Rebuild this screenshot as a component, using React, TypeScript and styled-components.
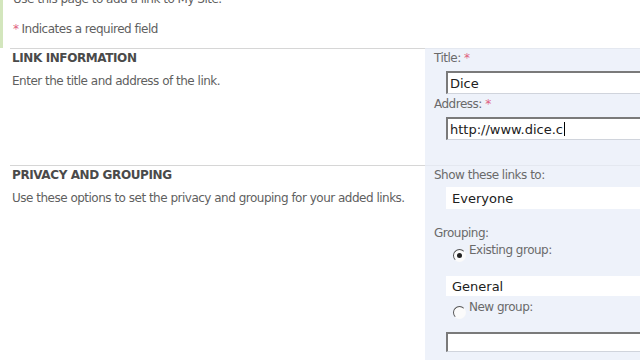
import React from 'react'
import styled, { createGlobalStyle } from 'styled-components'

const GlobalStyle = createGlobalStyle`
  html, body {
    margin: 0;
    padding: 0;
    background: #ffffff;
    overflow: hidden;
  }
  body {
    width: 640px;
    height: 360px;
    font-family: "DejaVu Sans", Verdana, sans-serif;
    color: #5a5a5a;
  }
`

const Page = styled.div`
  width: 640px;
  height: 360px;
  overflow: hidden;
  display: flex;
  flex-direction: column;
`

const Intro = styled.div`
  border-left: 3px solid #d3e6bd;
  padding: 0 0 0 10px;
  height: 48px;
  box-sizing: border-box;
  display: flex;
  flex-direction: column;
  gap: 15px;
`

const IntroLine = styled.div`
  font-size: 12px;
  letter-spacing: -0.5px;
  line-height: 15px;
  margin-top: -8px;
  color: #5f5f5f;
`

const RequiredNote = styled.div`
  font-size: 12px;
  letter-spacing: -0.5px;
  line-height: 15px;
  color: #5f5f5f;
`

const Star = styled.span`
  color: #e0607e;
  margin-right: 3px;
`

const Section = styled.div<{ h: number }>`
  display: grid;
  grid-template-columns: 425px 1fr;
  height: ${p => p.h}px;
  flex: none;
`

const LeftCol = styled.div`
  margin-left: 10px;
  border-top: 1px solid #d6d6d6;
  padding: 2px 0 0 2px;
`

const RightCol = styled.div`
  background: #eef2fa;
  border-top: 1px solid #e4e8f0;
  padding: 2px 0 0 9px;
  display: flex;
  flex-direction: column;
`

const Heading = styled.div`
  font-size: 12px;
  line-height: 15px;
  font-weight: bold;
  color: #4a4a4a;
  letter-spacing: -0.4px;
`

const Desc = styled.div`
  font-size: 12px;
  line-height: 15px;
  letter-spacing: -0.5px;
  margin-top: 8px;
  color: #5f5f5f;
`

const Label = styled.div<{ mt?: number }>`
  font-size: 12px;
  line-height: 15px;
  letter-spacing: -0.5px;
  color: #6a6a6a;
  margin-top: ${p => p.mt ?? 0}px;
`

const TextBox = styled.div<{ mt?: number; h?: number }>`
  box-sizing: border-box;
  margin: ${p => p.mt ?? 0}px 0 0 12px;
  height: ${p => p.h ?? 23}px;
  background: #ffffff;
  border-top: 2px solid #7a7a7a;
  border-left: 2px solid #7a7a7a;
  border-bottom: 1px solid #d0d4dc;
  font-size: 13px;
  color: #202020;
  padding-left: 2px;
  display: flex;
  align-items: center;
`

const SelectBox = styled.div<{ mt?: number; h?: number }>`
  margin: ${p => p.mt ?? 0}px 0 0 12px;
  height: ${p => p.h ?? 22}px;
  background: #ffffff;
  font-size: 13px;
  color: #202020;
  padding-left: 6px;
  display: flex;
  align-items: center;
`

const Caret = styled.span`
  display: inline-block;
  width: 1px;
  height: 14px;
  background: #000;
  margin-left: 1px;
`

const RadioRow = styled.div<{ mt?: number }>`
  display: flex;
  align-items: flex-start;
  margin: ${p => p.mt ?? 0}px 0 0 19px;
  font-size: 12px;
  line-height: 15px;
  letter-spacing: -0.5px;
  color: #6a6a6a;
  height: 24px;
`

const Radio = styled.span<{ on?: boolean }>`
  width: 11px;
  height: 11px;
  margin-top: 6px;
  margin-right: 3px;
  border-radius: 50%;
  border: 1px solid transparent;
  border-left-color: #555;
  border-top-color: #555;
  background: #fbfbfb;
  position: relative;
  flex: none;
  &::after {
    content: '';
    display: ${p => (p.on ? 'block' : 'none')};
    position: absolute;
    left: 3px;
    top: 3px;
    width: 5px;
    height: 5px;
    border-radius: 50%;
    background: #222;
  }
`

export default function App() {
  return (
    <Page>
      <GlobalStyle />
      <Intro>
        <IntroLine>Use this page to add a link to My Site.</IntroLine>
        <RequiredNote>
          <Star>*</Star>Indicates a required field
        </RequiredNote>
      </Intro>

      <Section h={117}>
        <LeftCol>
          <Heading>LINK INFORMATION</Heading>
          <Desc>Enter the title and address of the link.</Desc>
        </LeftCol>
        <RightCol>
          <Label>
            Title: <Star>*</Star>
          </Label>
          <TextBox mt={5}>Dice</TextBox>
          <Label mt={3}>
            Address: <Star>*</Star>
          </Label>
          <TextBox mt={5}>
            http://www.dice.c<Caret />
          </TextBox>
        </RightCol>
      </Section>

      <Section h={195}>
        <LeftCol>
          <Heading>PRIVACY AND GROUPING</Heading>
          <Desc>Use these options to set the privacy and grouping for your added links.</Desc>
        </LeftCol>
        <RightCol>
          <Label>Show these links to:</Label>
          <SelectBox mt={4}>Everyone</SelectBox>
          <Label mt={17}>Grouping:</Label>
          <RadioRow mt={2}>
            <Radio on />
            Existing group:
          </RadioRow>
          <SelectBox mt={9} h={20}>General</SelectBox>
          <RadioRow mt={4}>
            <Radio />
            New group:
          </RadioRow>
          <TextBox mt={8} h={20}></TextBox>
        </RightCol>
      </Section>
    </Page>
  )
}
